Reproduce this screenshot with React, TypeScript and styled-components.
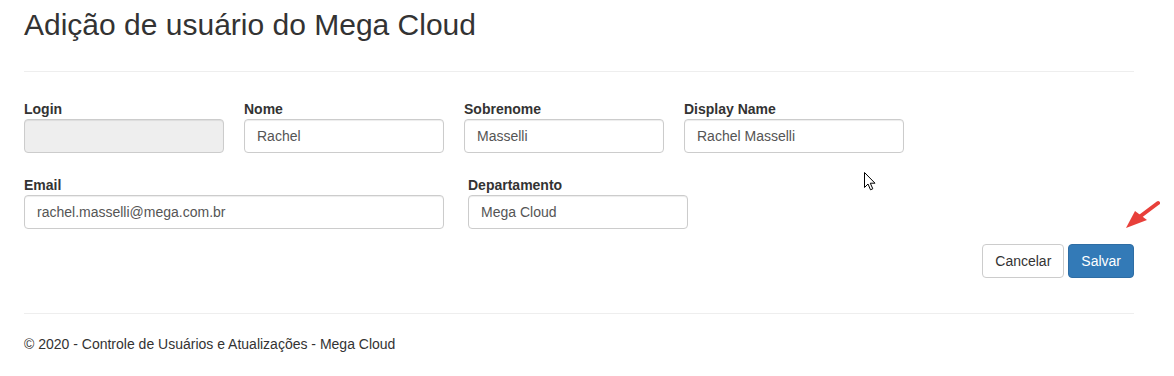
import React from 'react';
import styled, { createGlobalStyle } from 'styled-components';

const GlobalStyle = createGlobalStyle`
  html, body {
    margin: 0;
    padding: 0;
    background: #fff;
  }
  body {
    font-family: "Liberation Sans", Arial, Helvetica, sans-serif;
    font-size: 14px;
    line-height: 20px;
    color: #333;
  }
  * {
    box-sizing: border-box;
  }
`;

const Page = styled.div`
  position: relative;
  width: 1110px;
  margin-left: 24px;
  padding-top: 8px;
  padding-bottom: 20px;
`;

const Title = styled.h2`
  margin: 0;
  font-size: 30px;
  line-height: 33px;
  font-weight: 400;
  color: #333;
`;

const Divider = styled.hr<{ $top: number; $bottom: number }>`
  margin: ${(p) => p.$top}px 0 ${(p) => p.$bottom}px;
  border: 0;
  border-top: 1px solid #eee;
  height: 0;
`;

const Form = styled.form`
  display: flex;
  flex-direction: column;
`;

const Row = styled.div<{ $gap: number; $top?: number }>`
  display: flex;
  gap: ${(p) => p.$gap}px;
  margin-top: ${(p) => p.$top ?? 0}px;
`;

const Field = styled.div<{ $width: number }>`
  display: flex;
  flex-direction: column;
  width: ${(p) => p.$width}px;
`;

const Label = styled.label`
  font-weight: 700;
  font-size: 14px;
  line-height: 20px;
  color: #333;
`;

const Input = styled.input`
  height: 34px;
  padding: 6px 12px;
  font-family: inherit;
  font-size: 14px;
  line-height: 20px;
  color: #555;
  background: #fff;
  border: 1px solid #ccc;
  border-radius: 4px;
  box-shadow: inset 0 1px 1px rgba(0, 0, 0, 0.075);
  outline: none;

  &:disabled {
    background: #eee;
    opacity: 1;
  }
`;

const Actions = styled.div`
  display: flex;
  justify-content: flex-end;
  gap: 4px;
  margin-top: 15px;
`;

const Button = styled.button<{ $primary?: boolean }>`
  height: 34px;
  padding: 6px 12px;
  font-family: inherit;
  font-size: 14px;
  line-height: 20px;
  border-radius: 4px;
  border: 1px solid ${(p) => (p.$primary ? '#2e6da4' : '#ccc')};
  background: ${(p) => (p.$primary ? '#337ab7' : '#fff')};
  color: ${(p) => (p.$primary ? '#fff' : '#333')};
  cursor: pointer;
`;

const Footer = styled.footer`
  font-size: 14px;
  line-height: 20px;
  color: #333;
`;

const Pointer = styled.svg`
  position: absolute;
  left: 840px;
  top: 172px;
`;

const RedArrow = styled.svg`
  position: absolute;
  left: 1096px;
  top: 196px;
`;

const App: React.FC = () => {
  return (
    <>
      <GlobalStyle />
      <Page>
        <Title>Adição de usuário do Mega Cloud</Title>
        <Divider $top={30} $bottom={27} />

        <Form onSubmit={(e) => e.preventDefault()}>
          <Row $gap={20}>
            <Field $width={200}>
              <Label>Login</Label>
              <Input type="text" disabled />
            </Field>
            <Field $width={200}>
              <Label>Nome</Label>
              <Input type="text" defaultValue="Rachel" />
            </Field>
            <Field $width={200}>
              <Label>Sobrenome</Label>
              <Input type="text" defaultValue="Masselli" />
            </Field>
            <Field $width={220}>
              <Label>Display Name</Label>
              <Input type="text" defaultValue="Rachel Masselli" />
            </Field>
          </Row>

          <Row $gap={24} $top={22}>
            <Field $width={420}>
              <Label>Email</Label>
              <Input type="text" defaultValue="rachel.masselli@mega.com.br" />
            </Field>
            <Field $width={220}>
              <Label>Departamento</Label>
              <Input type="text" defaultValue="Mega Cloud" />
            </Field>
          </Row>

          <Actions>
            <Button type="button">Cancelar</Button>
            <Button type="submit" $primary>Salvar</Button>
          </Actions>
        </Form>

        <Divider $top={35} $bottom={20} />
        <Footer>© 2020 - Controle de Usuários e Atualizações - Mega Cloud</Footer>

        {/* mouse pointer captured in the screenshot */}
        <Pointer width="14" height="20" viewBox="0 0 14 20">
          <path
            d="M0.5 0.5 L0.5 15.5 L4 12 L6.5 17.8 L8.8 16.8 L6.3 11.2 L11 11.2 Z"
            fill="#fff"
            stroke="#000"
            strokeWidth="1"
            strokeLinejoin="miter"
          />
        </Pointer>

        {/* red annotation arrow pointing at Salvar */}
        <RedArrow width="40" height="36" viewBox="0 0 40 36">
          <line x1="38" y1="7" x2="18" y2="22" stroke="#e8403a" strokeWidth="4" strokeLinecap="round" />
          <polygon points="6,32 15,15 27,24" fill="#e8403a" />
        </RedArrow>
      </Page>
    </>
  );
};

export default App;
